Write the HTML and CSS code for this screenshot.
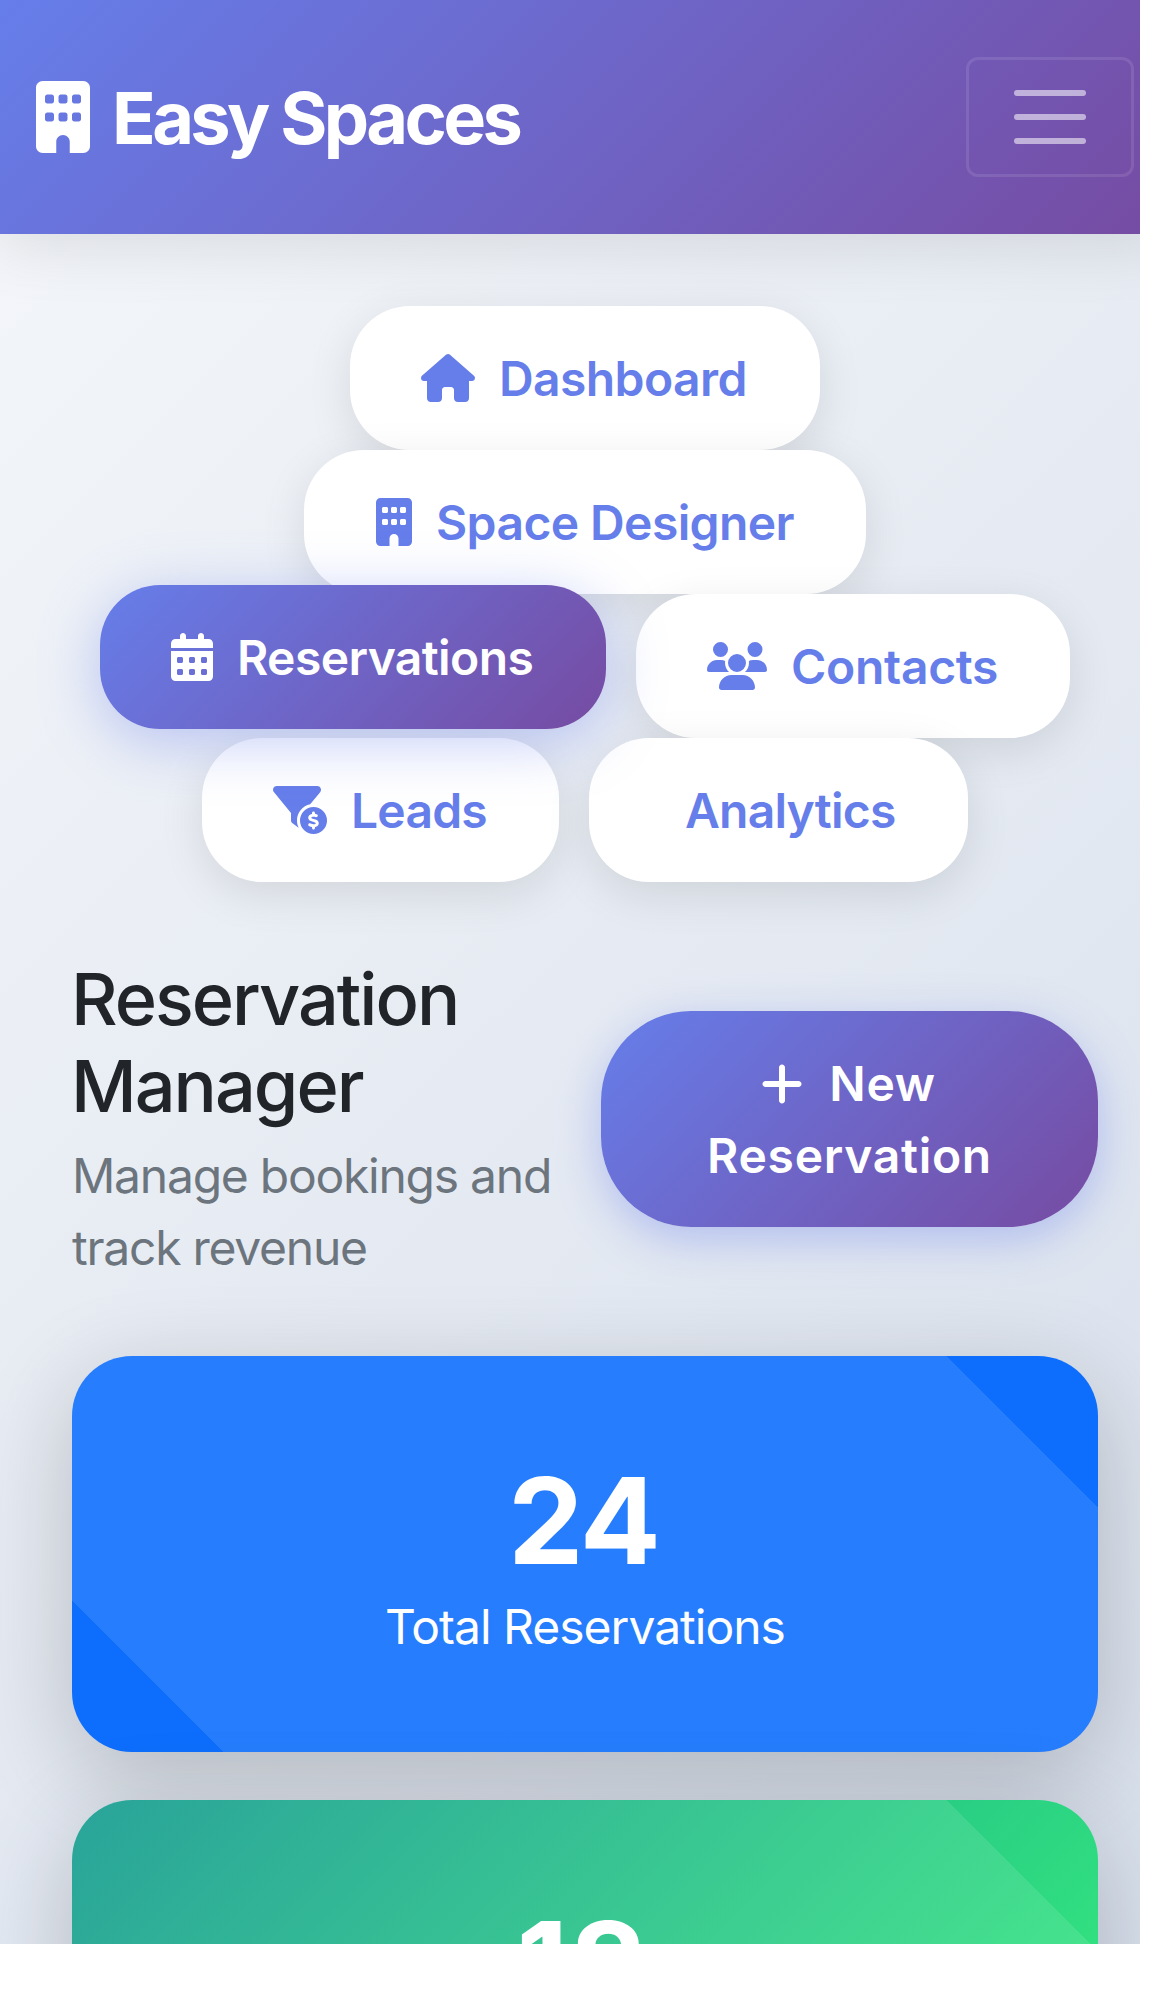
FILE: index.html
```html
<!DOCTYPE html>
<html lang="en">
<head>
<meta charset="utf-8">
<title>Easy Spaces</title>
<link rel="stylesheet" href="styles.css">
</head>
<body>
<div class="viewport">
<div class="page">
  <header class="navbar">
    <a class="brand">
      <svg class="brand-icon" viewBox="0 0 384 512"><path d="M48 0C21.500 0 0 21.500 0 48V464c0 26.500 21.500 48 48 48h96V432c0-26.500 21.500-48 48-48s48 21.500 48 48v80h96c26.500 0 48-21.500 48-48V48c0-26.500-21.500-48-48-48H48zM64 240c0-8.800 7.200-16 16-16h32c8.800 0 16 7.200 16 16v32c0 8.800-7.200 16-16 16H80c-8.800 0-16-7.200-16-16V240zm112-16h32c8.800 0 16 7.200 16 16v32c0 8.800-7.200 16-16 16H176c-8.800 0-16-7.200-16-16V240c0-8.800 7.200-16 16-16zm80 16c0-8.800 7.200-16 16-16h32c8.800 0 16 7.200 16 16v32c0 8.800-7.200 16-16 16H272c-8.800 0-16-7.200-16-16V240zM80 96h32c8.800 0 16 7.200 16 16v32c0 8.800-7.200 16-16 16H80c-8.800 0-16-7.200-16-16V112c0-8.800 7.200-16 16-16zm80 16c0-8.800 7.200-16 16-16h32c8.800 0 16 7.200 16 16v32c0 8.800-7.200 16-16 16H176c-8.800 0-16-7.200-16-16V112zM272 96h32c8.800 0 16 7.200 16 16v32c0 8.800-7.200 16-16 16H272c-8.800 0-16-7.200-16-16V112c0-8.800 7.200-16 16-16z"/></svg>
      <span class="brand-name">Easy Spaces</span>
    </a>
    <button class="toggler" aria-label="Menu"><span class="bar"></span><span class="bar"></span><span class="bar"></span></button>
  </header>

  <nav class="pills">
    <a class="pill pill-dashboard">
      <svg class="icon icon-home" viewBox="0 0 576 512"><path d="M575.800 255.500c0 18-15 32.100-32 32.100h-32l.7 160.200c0 2.700-.2 5.400-.5 8.100V472c0 22.100-17.900 40-40 40H456c-1.100 0-2.200 0-3.300-.1c-1.400 .1-2.800 .1-4.200 .1H416 392c-22.100 0-40-17.900-40-40V448 384c0-17.700-14.300-32-32-32H256c-17.700 0-32 14.300-32 32v64 24c0 22.100-17.900 40-40 40H160 128.100c-1.500 0-3-.1-4.500-.2c-1.200 .1-2.400 .2-3.600 .2H104c-22.100 0-40-17.900-40-40V360c0-.9 0-1.900 .1-2.800V287.600H32c-18 0-32-14-32-32.100c0-9 3-17 10-24L266.400 8c7-7 15-8 22-8s15 2 21 7L564.800 231.500c8 7 12 15 11 24z"/></svg>
      <span>Dashboard</span>
    </a>
    <a class="pill pill-designer">
      <svg class="icon icon-building" viewBox="0 0 384 512"><path d="M48 0C21.500 0 0 21.500 0 48V464c0 26.500 21.500 48 48 48h96V432c0-26.500 21.500-48 48-48s48 21.500 48 48v80h96c26.500 0 48-21.500 48-48V48c0-26.500-21.500-48-48-48H48zM64 240c0-8.800 7.200-16 16-16h32c8.800 0 16 7.200 16 16v32c0 8.800-7.200 16-16 16H80c-8.800 0-16-7.200-16-16V240zm112-16h32c8.800 0 16 7.200 16 16v32c0 8.800-7.200 16-16 16H176c-8.800 0-16-7.200-16-16V240c0-8.800 7.200-16 16-16zm80 16c0-8.800 7.200-16 16-16h32c8.800 0 16 7.200 16 16v32c0 8.800-7.200 16-16 16H272c-8.800 0-16-7.200-16-16V240zM80 96h32c8.800 0 16 7.200 16 16v32c0 8.800-7.200 16-16 16H80c-8.800 0-16-7.200-16-16V112c0-8.800 7.200-16 16-16zm80 16c0-8.800 7.200-16 16-16h32c8.800 0 16 7.200 16 16v32c0 8.800-7.200 16-16 16H176c-8.800 0-16-7.200-16-16V112zM272 96h32c8.800 0 16 7.200 16 16v32c0 8.800-7.200 16-16 16H272c-8.800 0-16-7.200-16-16V112c0-8.800 7.200-16 16-16z"/></svg>
      <span>Space Designer</span>
    </a>
    <a class="pill pill-reservations active">
      <svg class="icon icon-calendar" viewBox="0 0 448 512"><path d="M128 0c17.700 0 32 14.300 32 32V64H288V32c0-17.700 14.300-32 32-32s32 14.300 32 32V64h48c26.500 0 48 21.500 48 48v48H0V112C0 85.500 21.500 64 48 64H96V32c0-17.700 14.300-32 32-32zM0 192H448V464c0 26.500-21.500 48-48 48H48c-26.500 0-48-21.500-48-48V192zm64 80v32c0 8.800 7.200 16 16 16h32c8.800 0 16-7.200 16-16V272c0-8.800-7.200-16-16-16H80c-8.800 0-16 7.200-16 16zm128 0v32c0 8.800 7.200 16 16 16h32c8.800 0 16-7.200 16-16V272c0-8.800-7.200-16-16-16H208c-8.800 0-16 7.200-16 16zm144-16c-8.800 0-16 7.200-16 16v32c0 8.800 7.200 16 16 16h32c8.800 0 16-7.200 16-16V272c0-8.800-7.200-16-16-16H336zM64 400v32c0 8.800 7.200 16 16 16h32c8.800 0 16-7.200 16-16V400c0-8.800-7.200-16-16-16H80c-8.800 0-16 7.200-16 16zm144-16c-8.800 0-16 7.200-16 16v32c0 8.800 7.200 16 16 16h32c8.800 0 16-7.200 16-16V400c0-8.800-7.200-16-16-16H208zm112 16v32c0 8.800 7.200 16 16 16h32c8.800 0 16-7.200 16-16V400c0-8.800-7.200-16-16-16H336c-8.800 0-16 7.200-16 16z"/></svg>
      <span>Reservations</span>
    </a>
    <a class="pill pill-contacts">
      <svg class="icon icon-users" viewBox="0 0 640 512"><path d="M144 0a80 80 0 1 1 0 160A80 80 0 1 1 144 0zM512 0a80 80 0 1 1 0 160A80 80 0 1 1 512 0zM0 298.700C0 239.800 47.800 192 106.700 192h42.700c15.900 0 31 3.500 44.600 9.700c-1.300 7.200-1.900 14.700-1.900 22.300c0 38.200 16.800 72.500 43.300 96c-.2 0-.4 0-.7 0H21.300C9.600 320 0 310.400 0 298.700zM405.300 320c-.2 0-.4 0-.7 0c26.600-23.500 43.300-57.800 43.300-96c0-7.600-.7-15-1.900-22.300c13.600-6.300 28.700-9.700 44.600-9.700h42.700C592.200 192 640 239.800 640 298.700c0 11.800-9.600 21.300-21.300 21.300H405.300zM224 224a96 96 0 1 1 192 0 96 96 0 1 1 -192 0zM128 485.300C128 411.700 187.700 352 261.300 352H378.700C452.300 352 512 411.700 512 485.300c0 14.700-11.900 26.700-26.700 26.700H154.700c-14.700 0-26.700-11.900-26.700-26.700z"/></svg>
      <span>Contacts</span>
    </a>
    <a class="pill pill-leads">
      <svg class="icon icon-funnel" viewBox="0 0 576 512"><path d="M3.900 22.900C10.500 8.900 24.500 0 40 0H472c15.500 0 29.500 8.900 36.100 22.900s4.600 30.500-5.200 42.500L396.400 195.600C316.200 212.100 256 283 256 368c0 27.400 6.300 53.400 17.500 76.500c-1.600-.8-3.200-1.800-4.700-2.900l-64-48c-8.100-6-12.800-15.500-12.800-25.600V288.900L9 65.300C-.7 53.400-2.800 36.800 3.900 22.900zM288 368a144 144 0 1 1 288 0 144 144 0 1 1 -288 0zm120.800-32.600c.6-.9 1.800-2.100 4.200-3.400c5.100-2.700 12.500-4.100 18.700-4c8.200 .1 17.100 1.800 26.400 4.100c8.600 2.100 17.300-3.100 19.400-11.700s-3.100-17.300-11.700-19.400c-5.600-1.400-11.600-2.700-17.900-3.700V288c0-8.800-7.200-16-16-16s-16 7.200-16 16v9.500c-6.100 1.200-12.300 3.200-18 6.300c-11.800 6.300-23 18.400-21.800 37.200c1 16 11.700 25.300 21.600 30.700c8.800 4.700 19.700 7.800 28.600 10.300l1.800 .5c10.300 2.900 17.900 5.200 23.200 8.300c4.500 2.700 4.700 4.200 4.700 5.600c.1 2.400-.5 3.700-1 4.500c-.6 1-1.800 2.200-4 3.300c-4.700 2.500-11.800 3.800-18.500 3.600c-9.500-.3-18.500-3.100-29.900-6.800c-1.900-.6-3.800-1.200-5.800-1.800c-8.400-2.600-17.400 2.100-20 10.500s2.100 17.400 10.500 20c1.600 .5 3.300 1 5 1.600c7 2.300 15.100 4.800 23.700 6.600v11.400c0 8.800 7.200 16 16 16s16-7.200 16-16V438.700c6.200-1.100 12.500-3.100 18.300-6.200c12.100-6.500 22.300-18.700 21.700-36.900c-.5-16.200-10.300-26.300-20.500-32.300c-9.400-5.600-21.200-8.900-30.500-11.500l-.2 0c-10.400-2.900-18.300-5.200-23.900-8.200c-4.800-2.600-4.800-4-4.800-4.500l0-.1c-.1-1.900 .3-2.900 .8-3.600z"/></svg>
      <span>Leads</span>
    </a>
    <a class="pill pill-analytics"><span>Analytics</span></a>
  </nav>

  <main class="content">
    <section class="heading">
      <div class="heading-text">
        <h1 class="title">Reservation Manager</h1>
        <p class="subtitle">Manage bookings and track revenue</p>
      </div>
      <button class="new-button">
        <span class="new-line"><svg class="icon icon-plus" viewBox="0 0 448 512"><path d="M256 80c0-17.700-14.300-32-32-32s-32 14.300-32 32V224H48c-17.700 0-32 14.300-32 32s14.300 32 32 32H192V432c0 17.700 14.300 32 32 32s32-14.300 32-32V288H400c17.700 0 32-14.300 32-32s-14.300-32-32-32H256V80z"/></svg><span>New</span></span>
        <span>Reservation</span>
      </button>
    </section>
    <section class="cards">
      <article class="card card-blue"><div class="number">24</div><div class="label">Total Reservations</div></article>
      <article class="card card-green"><div class="number number-second">18</div></article>
    </section>
  </main>
</div>
</div>
</body>
</html>
```
FILE: styles.css
```css
* { box-sizing: border-box; }

html, body { margin: 0; background: #fff; }

body {
  font-family: Inter, "Liberation Sans", sans-serif;
  font-size: 48px;
  line-height: 72px;
  color: #212529;
}

button { margin: 0; font: inherit; border: 0; }

svg { display: block; fill: currentColor; flex: none; }

.viewport {
  width: 1140px;
  height: 1944px;
  overflow: hidden;
}

.page {
  width: 1170px;
  height: 4000px;
  background: linear-gradient(135deg, #f5f7fa 0%, #c3cfe2 100%);
}

.navbar {
  display: flex;
  align-items: center;
  justify-content: space-between;
  height: 234px;
  padding: 0 36px;
  background: linear-gradient(135deg, #667eea 0%, #764ba2 100%);
  box-shadow: 0 12px 60px rgba(0, 0, 0, 0.1);
  color: #fff;
}

.brand { display: flex; align-items: center; gap: 22px; }
.brand-icon { width: 54px; height: 72px; }
.brand-name { font-size: 72px; font-weight: 700; letter-spacing: -3.6px; line-height: 108px; padding-top: 1px; }

.toggler {
  display: flex;
  flex-direction: column;
  align-items: center;
  justify-content: center;
  gap: 18px;
  width: 168px;
  height: 120px;
  border: 3px solid rgba(255, 255, 255, 0.1);
  border-radius: 12px;
  background: none;
}
.bar { width: 72px; height: 6px; border-radius: 3px; background: rgba(255, 255, 255, 0.55); }

.pills {
  display: flex;
  flex-wrap: wrap;
  justify-content: center;
  column-gap: 30px;
  padding: 72px 72px 0;
}

.pill {
  display: flex;
  align-items: center;
  gap: 24px;
  height: 144px;
  padding-left: 71px;
  border-radius: 60px;
  background: #fff;
  box-shadow: 0 12px 45px rgba(0, 0, 0, 0.1);
  color: #667eea;
  font-weight: 600;
  letter-spacing: -0.6px;
  white-space: nowrap;
}
.pill > span { padding-top: 2px; }
.pill.active {
  background: linear-gradient(135deg, #667eea 0%, #764ba2 100%);
  box-shadow: 0 12px 60px rgba(102, 126, 234, 0.4);
  color: #fff;
  transform: translateY(-9px);
}
.pill-dashboard { width: 470px; }
.pill-designer { width: 562px; padding-left: 72px; }
.pill-reservations { width: 506px; }
.pill-contacts { width: 434px; letter-spacing: -0.3px; }
.pill-leads { width: 357px; letter-spacing: -0.8px; }
.pill-analytics { width: 379px; padding-left: 96px; letter-spacing: -0.8px; }

.icon { height: 48px; }
.icon-home, .icon-funnel { width: 54px; }
.icon-building { width: 36px; }
.icon-calendar, .icon-plus { width: 42px; }
.icon-users { width: 60px; }

.content { padding: 72px 72px 0; }

.heading {
  display: flex;
  align-items: center;
  justify-content: space-between;
  height: 330px;
}
.heading-text { width: 500px; }
.title { margin: 0 0 11px -1px; font-size: 72px; font-weight: 500; line-height: 87px; letter-spacing: -2px; }
.subtitle { margin: 0; color: #6c757d; letter-spacing: -1.25px; }

.new-button {
  display: flex;
  flex-direction: column;
  align-items: center;
  justify-content: center;
  width: 497px;
  height: 216px;
  padding: 2px 0 0;
  border-radius: 90px;
  background: linear-gradient(135deg, #667eea 0%, #764ba2 100%);
  box-shadow: 0 12px 45px rgba(102, 126, 234, 0.4);
  color: #fff;
  font-weight: 600;
  letter-spacing: 0.7px;
}
.new-line { display: flex; align-items: center; gap: 26px; margin-left: -2px; }

.cards { display: flex; flex-direction: column; gap: 48px; padding-top: 72px; }

.card {
  height: 396px;
  padding-top: 93px;
  border-radius: 60px;
  box-shadow: 0 24px 96px rgba(0, 0, 0, 0.2);
  color: #fff;
  text-align: center;
}
/* diagonal sheen leaves two opposite corners uncovered */
.card-blue {
  background: linear-gradient(45deg, transparent 107px, rgba(255, 255, 255, 0.1) 107px, rgba(255, 255, 255, 0.1) calc(100% - 107px), transparent calc(100% - 107px)), #0d6efd;
}
.card-green {
  background: linear-gradient(45deg, transparent 107px, rgba(255, 255, 255, 0.1) 107px, rgba(255, 255, 255, 0.1) calc(100% - 107px), transparent calc(100% - 107px)), linear-gradient(135deg, #11998e 0%, #38ef7d 100%);
}
.number { font-size: 120px; font-weight: 700; line-height: 144px; letter-spacing: -2px; margin-left: -3px; }
.number-second { letter-spacing: 1px; margin-left: -5px; }
.label { margin-top: -2px; letter-spacing: -1px; }
```
